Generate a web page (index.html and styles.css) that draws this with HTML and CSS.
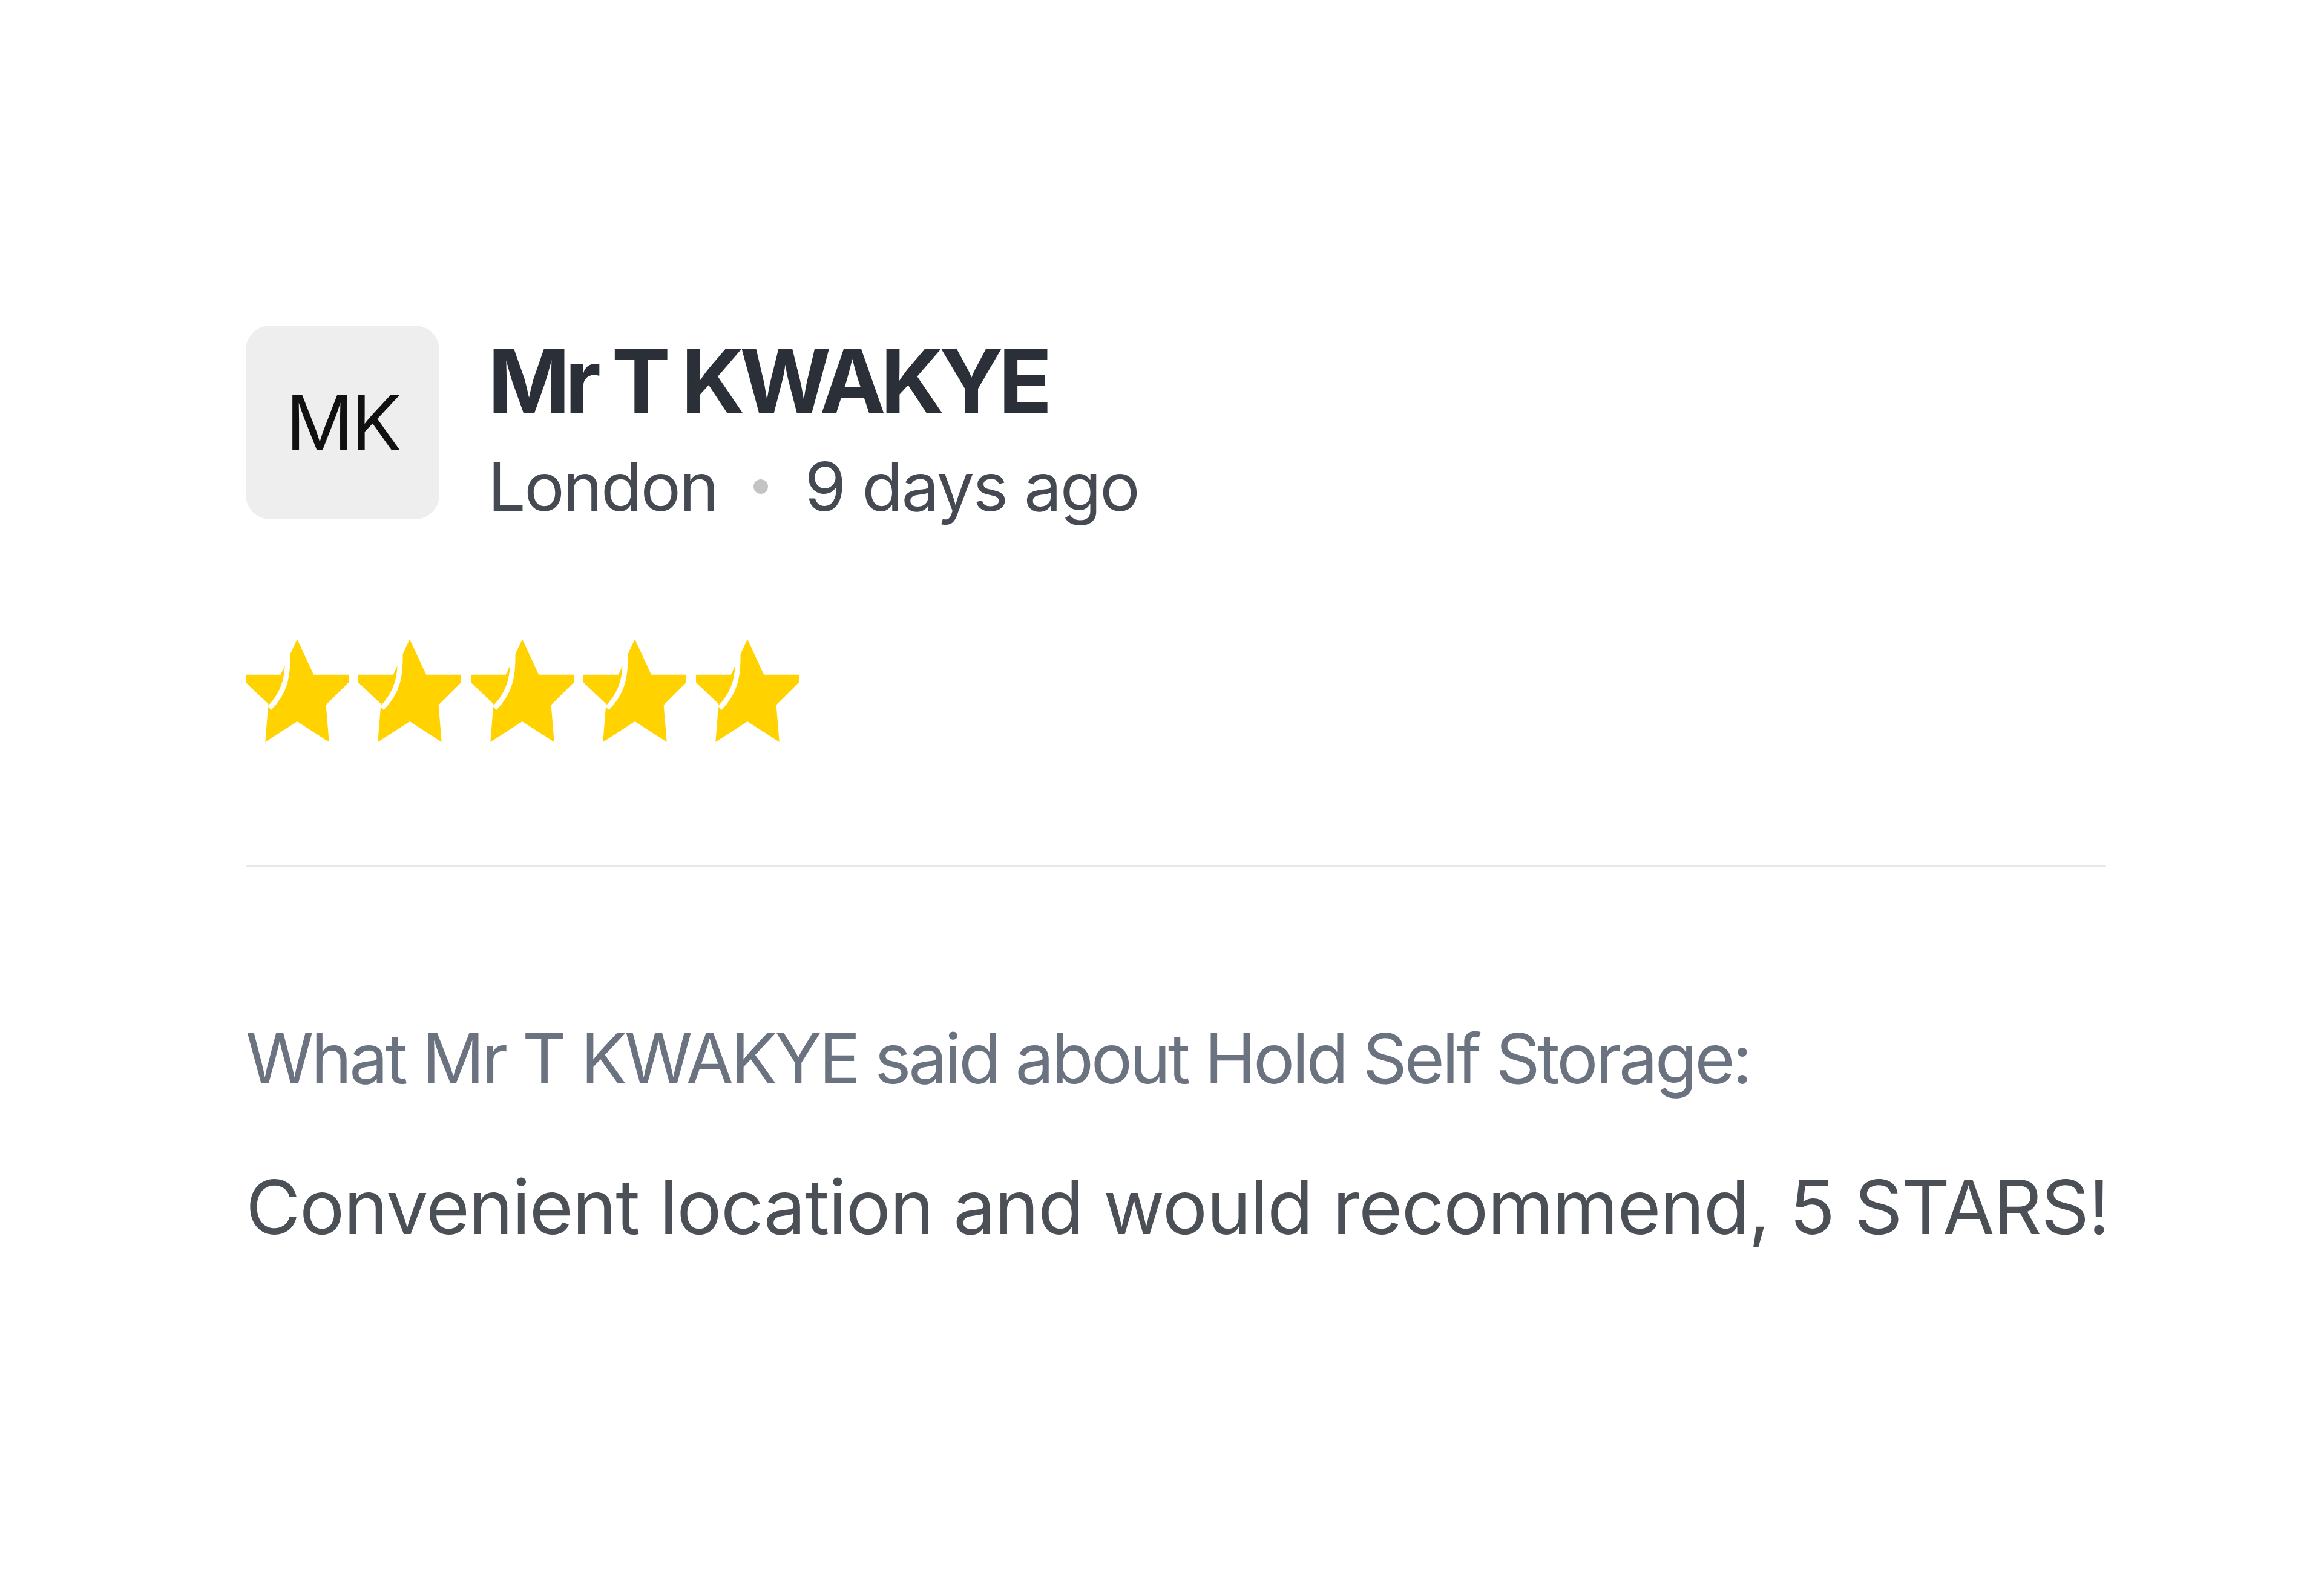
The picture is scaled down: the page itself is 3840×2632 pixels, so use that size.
FILE: index.html
```html
<!DOCTYPE html>
<html lang="en">
<head>
<meta charset="utf-8">
<title>Review</title>
<link rel="stylesheet" href="styles.css">
</head>
<body>
<div class="review">
  <div class="header">
    <div class="avatar">MK</div>
    <div class="info">
      <div class="name">Mr T KWAKYE</div>
      <div class="meta"><span>London</span><span class="dot"></span><span>9 days ago</span></div>
    </div>
  </div>
  <div class="stars">
    <svg class="star" viewBox="0 0 100 100"><polygon points="50,0 66,34.5 100,34.5 100,42 78,64 81,100 50,80 19,100 22,63 0,42 0,34.5 34,34.5"/><path d="M40.5 8 C42 36 38 52 23 67" /></svg>
    <svg class="star" viewBox="0 0 100 100"><polygon points="50,0 66,34.5 100,34.5 100,42 78,64 81,100 50,80 19,100 22,63 0,42 0,34.5 34,34.5"/><path d="M40.5 8 C42 36 38 52 23 67" /></svg>
    <svg class="star" viewBox="0 0 100 100"><polygon points="50,0 66,34.5 100,34.5 100,42 78,64 81,100 50,80 19,100 22,63 0,42 0,34.5 34,34.5"/><path d="M40.5 8 C42 36 38 52 23 67" /></svg>
    <svg class="star" viewBox="0 0 100 100"><polygon points="50,0 66,34.5 100,34.5 100,42 78,64 81,100 50,80 19,100 22,63 0,42 0,34.5 34,34.5"/><path d="M40.5 8 C42 36 38 52 23 67" /></svg>
    <svg class="star" viewBox="0 0 100 100"><polygon points="50,0 66,34.5 100,34.5 100,42 78,64 81,100 50,80 19,100 22,63 0,42 0,34.5 34,34.5"/><path d="M40.5 8 C42 36 38 52 23 67" /></svg>
  </div>
  <div class="divider"></div>
  <div class="label">What Mr T KWAKYE said about Hold Self Storage:</div>
  <div class="quote">Convenient location and would recommend, 5 STARS!</div>
</div>
</body>
</html>
```
FILE: styles.css
```css
html, body {
  margin: 0;
  padding: 0;
  background: #ffffff;
}
body {
  font-family: Inter, "Liberation Sans", sans-serif;
}
.review {
  padding: 538px 0 0 406px;
  width: 3074px;
}
.header {
  display: flex;
  gap: 80px;
}
.avatar {
  width: 320px;
  height: 320px;
  border-radius: 40px;
  background: #eeeeee;
  display: flex;
  align-items: center;
  justify-content: center;
  font-size: 124px;
  color: #111111;
  letter-spacing: -4px;
}
.info {
  display: flex;
  flex-direction: column;
}
.name {
  margin-top: 4px;
  font-size: 146px;
  line-height: 1.2;
  font-weight: 700;
  color: #2a2f38;
  letter-spacing: -8.5px;
}
.meta {
  margin-top: 20px;
  font-size: 111px;
  line-height: 1.2;
  color: #454a52;
  letter-spacing: -2.6px;
  display: flex;
  align-items: center;
  gap: 60px;
}
.dot {
  width: 24px;
  height: 24px;
  border-radius: 50%;
  background: #c4c4c4;
}
.stars {
  margin-top: 186px;
  display: flex;
  gap: 16px;
}
.star {
  width: 170px;
  height: 170px;
  display: block;
}
.star polygon {
  fill: #ffd200;
}
.star path {
  fill: none;
  stroke: #ffffff;
  stroke-width: 5;
}
.divider {
  margin-top: 203px;
  height: 4px;
  background: #e8e8e8;
}
.label {
  margin-top: 248px;
  font-size: 114px;
  line-height: 1.2;
  color: #6b7280;
  letter-spacing: -4.3px;
}
.quote {
  margin-top: 102px;
  font-size: 124px;
  line-height: 1.2;
  color: #4b4f56;
  letter-spacing: -1.5px;
  white-space: nowrap;
}
```
